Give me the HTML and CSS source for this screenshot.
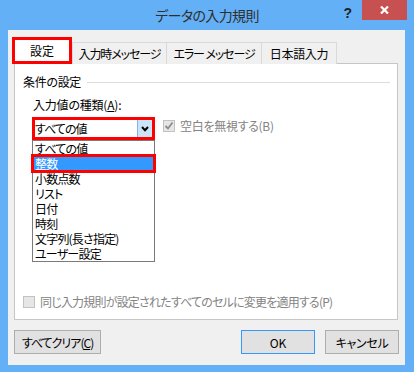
FILE: index.html
```html
<!DOCTYPE html>
<html lang="ja">
<head>
<meta charset="utf-8">
<link rel="stylesheet" href="styles.css">
</head>
<body>
<div class="window">
  <div class="titlebar">
    <div></div>
    <div class="title">データの入力規則</div>
    <div class="controls">
      <span class="help">?</span>
      <span class="close"><svg width="9" height="8" viewBox="0 0 9 8"><path d="M1 0.5 L8 7.5 M8 0.5 L1 7.5" stroke="#fff" stroke-width="2.2" fill="none"/></svg></span>
    </div>
  </div>
  <div class="client">
    <div class="tabs">
      <div class="tab active">設定</div>
      <div class="tab t2">入力時メッセージ</div>
      <div class="tab t3">エラー メッセージ</div>
      <div class="tab t4">日本語入力</div>
    </div>
    <div class="panel">
      <div class="group-head"><span>条件の設定</span><span class="rule"></span></div>
      <div class="label">入力値の種類(<u>A</u>):</div>
      <div class="row">
        <div class="combo-wrap">
          <div class="combo">
            <span class="value">すべての値</span>
            <span class="btn"><svg width="8" height="6" viewBox="0 0 8 6"><path d="M1 1 L4 4.2 L7 1" stroke="#000" stroke-width="2" fill="none"/></svg></span>
          </div>
          <ul class="list">
            <li>すべての値</li>
            <li class="sel">整数</li>
            <li>小数点数</li>
            <li>リスト</li>
            <li>日付</li>
            <li>時刻</li>
            <li>文字列(長さ指定)</li>
            <li>ユーザー設定</li>
          </ul>
        </div>
        <div class="check disabled top-check">
          <span class="box"><svg width="10" height="10" viewBox="0 0 10 10"><path d="M1.5 5 L4 7.5 L8.5 1.5" stroke="#8c8c8c" stroke-width="1.8" fill="none"/></svg></span>
          <span>空白を無視する(B)</span>
        </div>
      </div>
      <div class="check disabled bottom-check">
        <span class="box"></span>
        <span>同じ入力規則が設定されたすべてのセルに変更を適用する(P)</span>
      </div>
    </div>
    <div class="buttons">
      <button class="btn-clear">すべてクリア(<u>C</u>)</button>
      <span class="spacer"></span>
      <button class="btn-ok">OK</button>
      <button class="btn-cancel">キャンセル</button>
    </div>
  </div>
</div>
</body>
</html>
```
FILE: styles.css
```css
html, body {
  margin: 0;
  padding: 0;
}
body {
  width: 414px;
  height: 372px;
  overflow: hidden;
  font-family: "Noto Sans CJK JP", "Noto Sans", sans-serif;
  font-size: 12px;
  color: #000;
  font-feature-settings: "palt";
  letter-spacing: -0.8px;
}
.window {
  width: 414px;
  height: 372px;
  background: #64b0f6;
  display: flex;
  flex-direction: column;
}
.titlebar {
  height: 30px;
  flex: none;
  display: grid;
  grid-template-columns: 1fr auto 1fr;
  align-items: start;
}
.title {
  font-size: 14px;
  line-height: 30px;
  color: #2e2e2e;
  letter-spacing: -0.6px;
}
.controls {
  display: flex;
  justify-content: flex-end;
  align-items: flex-start;
  padding-right: 7px;
}
.help {
  font-family: "Liberation Sans", sans-serif;
  font-weight: bold;
  font-size: 14px;
  line-height: 14px;
  color: #1e1e1e;
  margin-top: 6px;
  margin-right: 10px;
  letter-spacing: 0;
}
.close {
  width: 45px;
  height: 20px;
  background: #c75050;
  display: flex;
  align-items: center;
  justify-content: center;
}
.client {
  flex: 1;
  margin: 0 9px 7px 8px;
  background: #f0f0f0;
  padding: 7px 6px 11px;
  display: flex;
  flex-direction: column;
}
.tabs {
  display: flex;
  align-items: flex-end;
  height: 27px;
  position: relative;
  z-index: 1;
}
.tab {
  box-sizing: border-box;
  height: 22px;
  border: 1px solid #d9d9d9;
  border-bottom: none;
  background: #f0f0f0;
  margin-left: -1px;
  display: flex;
  align-items: center;
  justify-content: center;
  white-space: nowrap;
  letter-spacing: -1.1px;
}
.tab.active {
  height: 27px;
  width: 60px;
  margin-left: -2px;
  border: 3px solid #f00;
  background: #fff;
  margin-right: 1px;
  letter-spacing: 0;
}
.t2 { width: 95px; }
.t3 { width: 96px; }
.t4 { width: 76px; letter-spacing: -0.3px; }
.panel {
  box-sizing: border-box;
  height: 257px;
  margin-top: -1px;
  margin-right: 1px;
  background: #fff;
  border: 1px solid #c6c6c6;
  padding: 0 0 9px 8px;
  display: flex;
  flex-direction: column;
}
.group-head {
  margin-top: 10px;
  display: flex;
  align-items: center;
  line-height: 16px;
  letter-spacing: -0.3px;
}
.rule {
  flex: 1;
  height: 1px;
  background: #dcdcdc;
  margin: 1px 7px 0 6px;
}
.label {
  margin-top: 7px;
  padding-left: 10px;
  line-height: 16px;
  letter-spacing: -0.2px;
}
.row {
  margin-top: 4px;
  padding-left: 9px;
  display: flex;
  align-items: flex-start;
}
.combo-wrap {
  box-sizing: border-box;
  width: 123px;
  height: 23px;
  border: 3px solid #f00;
  background: #fff;
  position: relative;
}
.combo {
  display: flex;
  height: 17px;
}
.value {
  flex: 1;
  line-height: 17px;
  letter-spacing: -1px;
}
.btn {
  box-sizing: border-box;
  width: 15px;
  height: 17px;
  background: #cce4f7;
  border-left: 1px solid #7eb4ea;
  display: flex;
  align-items: center;
  justify-content: center;
}
.list {
  position: absolute;
  left: -3px;
  top: 20px;
  width: 123px;
  box-sizing: border-box;
  margin: 0;
  padding: 0;
  list-style: none;
  border: 1px solid #7a7a7a;
  background: #fff;
  z-index: 2;
}
.list li {
  height: 15px;
  line-height: 15px;
  padding-left: 2px;
  white-space: nowrap;
  overflow: hidden;
}
.list li.sel {
  background: #3399ff;
  color: #fff;
  outline: 3px solid #f00;
  outline-offset: -1px;
  overflow: visible;
}
.check {
  display: flex;
  align-items: center;
  line-height: 16px;
}
.check.disabled {
  color: #838383;
}
.box {
  box-sizing: border-box;
  width: 12px;
  height: 12px;
  border: 1px solid #c2c2c2;
  background: #e6e6e6;
  display: flex;
  align-items: center;
  justify-content: center;
  margin-right: 5px;
  flex: none;
}
.top-check {
  margin-left: 8px;
  margin-top: 1px;
  letter-spacing: -0.3px;
}
.bottom-check {
  margin-top: auto;
}
.buttons {
  margin-top: 10px;
  display: flex;
  height: 24px;
}
.buttons button {
  box-sizing: border-box;
  height: 24px;
  border: 1px solid #adadad;
  background: #e1e1e1;
  font-family: "Noto Sans CJK JP", "Noto Sans", sans-serif;
  font-size: 12px;
  font-feature-settings: "palt";
  letter-spacing: -1px;
  color: #000;
  padding: 0;
  margin: 0;
}
.btn-clear { width: 87px; }
.spacer { flex: 1; }
.buttons .btn-ok {
  width: 74px;
  border-color: #3399ff;
  letter-spacing: 0;
}
.buttons .btn-cancel {
  width: 74px;
  margin-left: 10px;
  letter-spacing: -0.3px;
}
```
